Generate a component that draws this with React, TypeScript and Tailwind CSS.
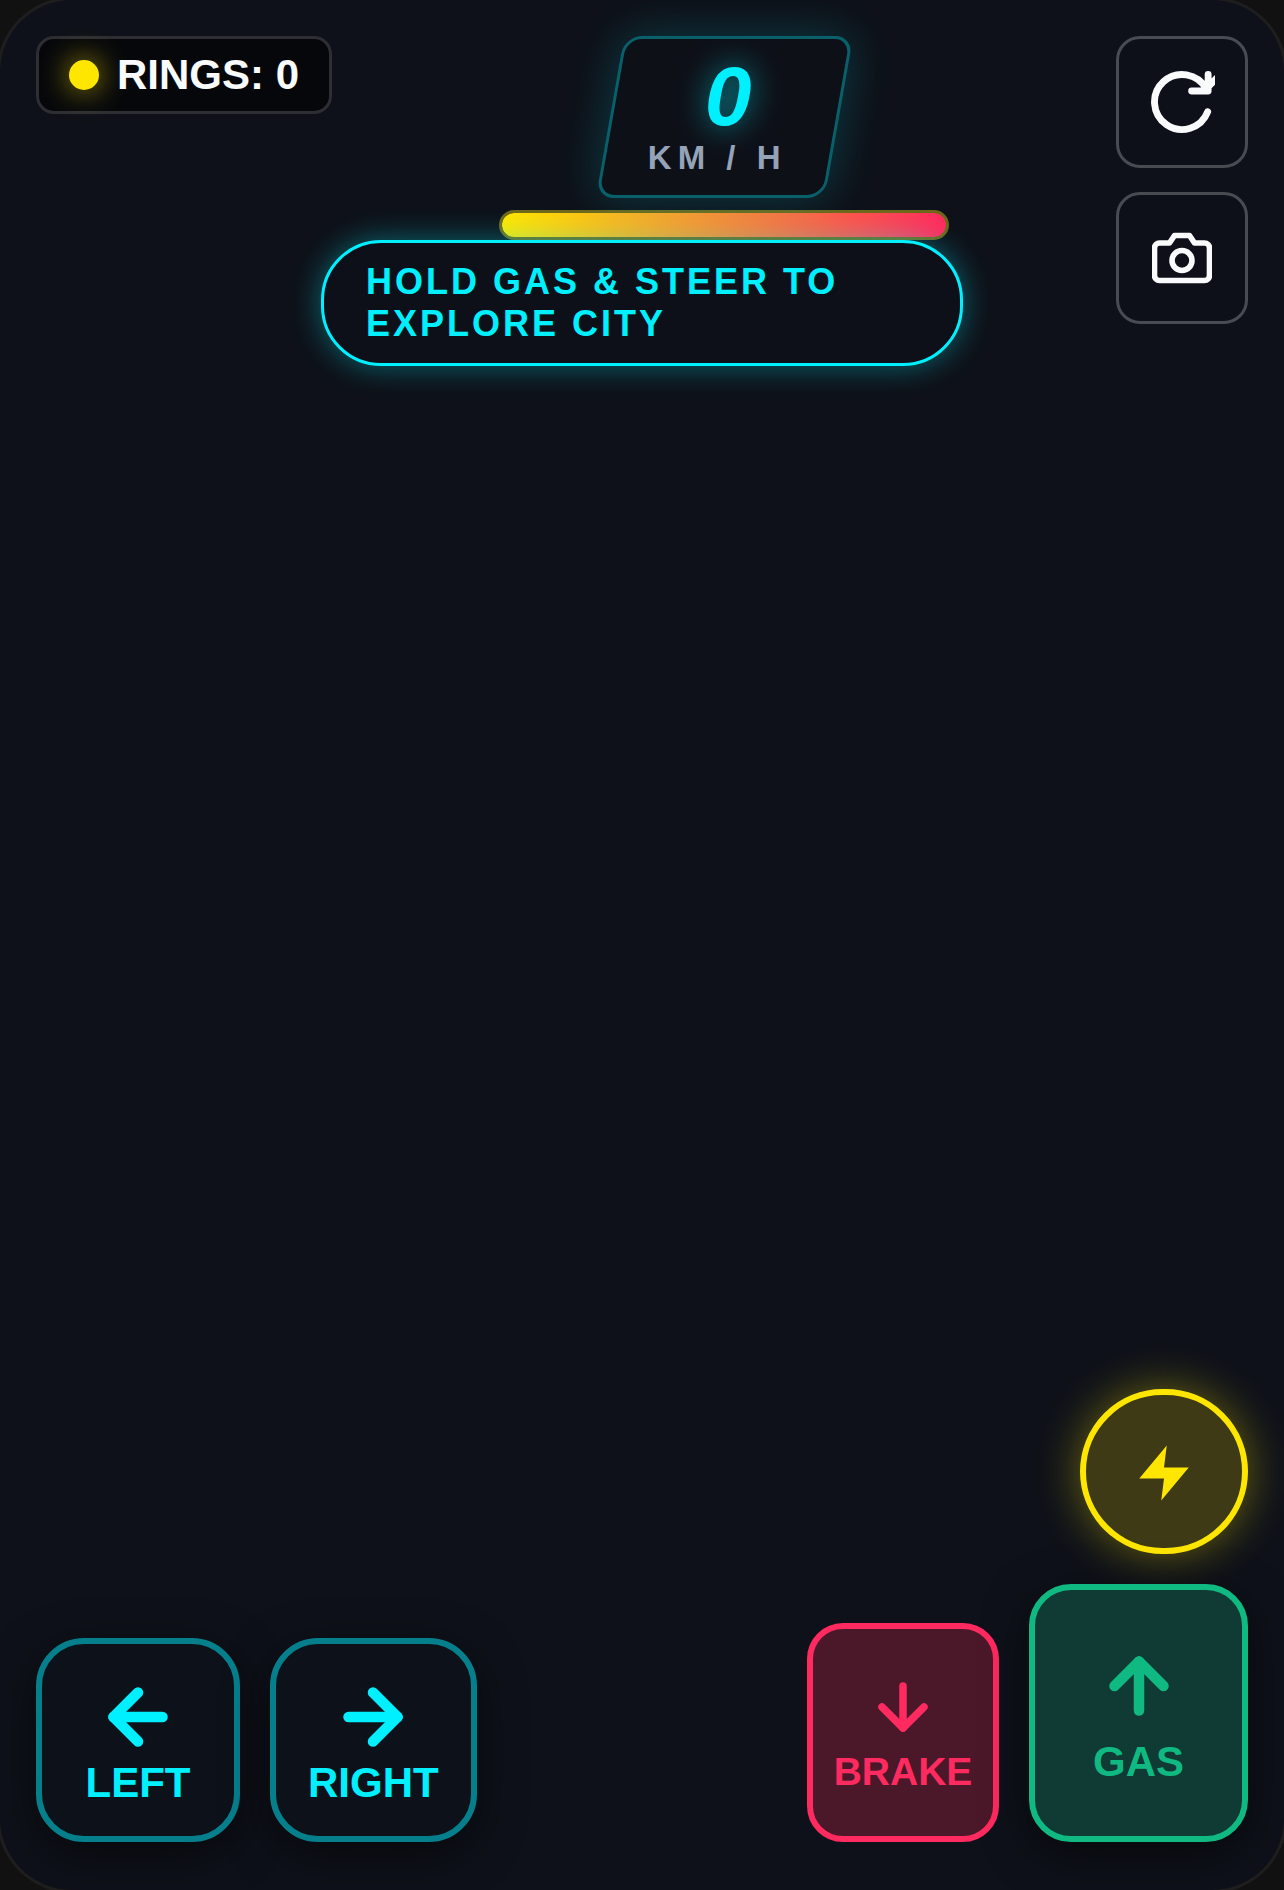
import React from 'react';
import { ArrowDown, ArrowLeft, ArrowRight, ArrowUp } from 'lucide-react';

const RefreshIcon = () => (
  <svg viewBox="0 0 24 24" className="size-[66px]" fill="none" stroke="currentColor" strokeWidth="2.5" strokeLinecap="round" strokeLinejoin="round" aria-hidden="true">
    <path d="M21.5 2v6h-6M21.34 15.57a10 10 0 1 1-.57-8.38l5.67-5.67" />
  </svg>
);

const CameraIcon = () => (
  <svg viewBox="0 0 24 24" className="size-[60px]" fill="none" stroke="currentColor" strokeWidth="2.25" strokeLinecap="round" strokeLinejoin="round" aria-hidden="true">
    <path d="M23 19a2 2 0 0 1-2 2H3a2 2 0 0 1-2-2V8a2 2 0 0 1 2-2h4l2-3h6l2 3h4a2 2 0 0 1 2 2z" />
    <circle cx="12" cy="13" r="4" />
  </svg>
);

const BoltIcon = () => (
  <svg viewBox="0 0 24 24" className="size-[66px]" fill="currentColor" aria-hidden="true">
    <path d="M13 2 3 14h9l-1 8 10-12h-9z" />
  </svg>
);

// Small square buttons in the top right corner
const tools = [
  { label: 'Restart', icon: <RefreshIcon /> },
  { label: 'Change camera', icon: <CameraIcon /> },
];

const steering = [
  { label: 'LEFT', icon: <ArrowLeft size={84} strokeWidth={3} /> },
  { label: 'RIGHT', icon: <ArrowRight size={84} strokeWidth={3} /> },
];

const App = () => (
  <div className="bg-[#111111] font-['Liberation_Sans',Arial,sans-serif] font-bold">
    <main className="relative flex min-h-screen flex-col justify-between overflow-hidden rounded-[72px] bg-[#0e1119] px-9 pt-9 pb-12 shadow-[0_0_0_3px_#1e1e1e]">
      {/* Top HUD */}
      <header className="flex items-start justify-between">
        <div className="flex items-center gap-[18px] rounded-[18px] border-3 border-[#2c2e33] bg-[#06070b] px-[30px] py-3 text-[42px] leading-[48px] text-[#f8fafc]">
          <span className="size-[30px] rounded-full bg-[#ffe600] shadow-[0_0_30px_rgba(255,230,0,0.7)]"></span>
          <span>RINGS: 0</span>
        </div>

        <div className="flex w-[450px] flex-col items-center gap-3">
          {/* Slanted plate, each line is slanted back on its own */}
          <div className="flex -skew-x-[10deg] flex-col items-center rounded-[18px] border-3 border-[#0a606a] bg-[#0e1018] px-[42px] pt-[15px] pb-[18px] shadow-[0_0_45px_rgba(0,240,255,0.2)]">
            <span className="skew-x-[10deg] text-[84px] leading-[84px] text-[#00f0ff] italic [text-shadow:0_0_30px_rgba(0,240,255,0.6)]">0</span>
            <span className="skew-x-[10deg] text-[33px] leading-[39px] tracking-[6px] text-[#94a3b8]">KM / H</span>
          </div>
          <div
            role="meter"
            aria-label="Boost"
            aria-valuenow={100}
            className="h-[30px] w-full overflow-hidden rounded-full border-3 border-[#6e671a] bg-[#6e671a]"
          >
            <div className="h-full rounded-full bg-linear-[90deg,#ffe600,#ff2a5f]" style={{ width: '100%' }}></div>
          </div>
        </div>

        <div className="flex flex-col gap-6">
          {tools.map((t) => (
            <button
              key={t.label}
              type="button"
              aria-label={t.label}
              className="flex size-[132px] items-center justify-center rounded-3xl border-3 border-[#484b52] bg-[#0d1018] text-[#f8fafc]"
            >
              {t.icon}
            </button>
          ))}
        </div>
      </header>

      {/* Hint floating over the scene */}
      <p className="absolute top-60 left-1/4 w-1/2 rounded-[60px] border-3 border-[#00f0ff] bg-[#0d1018] px-[42px] py-[18px] text-[36px] leading-[42px] tracking-[3px] text-[#00f0ff] shadow-[0_0_30px_rgba(0,240,255,0.4)]">
        HOLD GAS &amp; STEER TO EXPLORE CITY
      </p>

      {/* Driving controls */}
      <footer className="flex items-end justify-between">
        <div className="flex gap-[30px]">
          {steering.map((s) => (
            <button
              key={s.label}
              type="button"
              className="flex h-[204px] min-w-[204px] flex-col items-center justify-center rounded-[48px] border-6 border-[#067f8c] bg-[#0d1119] px-8 pt-0.5 text-[42px] leading-[48px] text-[#00f0ff] shadow-[0_12px_45px_rgba(0,0,0,0.5)]"
            >
              {s.icon}
              {s.label}
            </button>
          ))}
        </div>

        <div className="flex flex-col items-end gap-[30px]">
          <button
            type="button"
            aria-label="Boost"
            className="flex h-[165px] w-[168px] items-center justify-center rounded-full border-6 border-[#ffe600] bg-[#3e3a16] pt-0.5 text-[#ffe600] shadow-[0_0_45px_rgba(255,230,0,0.4)]"
          >
            <BoltIcon />
          </button>
          <div className="flex items-end gap-[30px]">
            <button
              type="button"
              className="flex h-[219px] w-48 flex-col items-center justify-center gap-1.5 rounded-[36px] border-6 border-[#ff2a5f] bg-[#4b182a] text-[39px] leading-[45px] text-[#ff2a5f]"
            >
              <ArrowDown size={72} strokeWidth={2.5} />
              BRAKE
            </button>
            <button
              type="button"
              className="flex h-[258px] w-[219px] flex-col items-center justify-center gap-2.5 rounded-[42px] border-6 border-[#10b981] bg-[#103a34] pt-1 text-[42px] leading-[48px] text-[#10b981] shadow-[0_12px_45px_rgba(0,0,0,0.5)]"
            >
              <ArrowUp size={84} strokeWidth={3} />
              GAS
            </button>
          </div>
        </div>
      </footer>
    </main>
  </div>
);

export default App;
